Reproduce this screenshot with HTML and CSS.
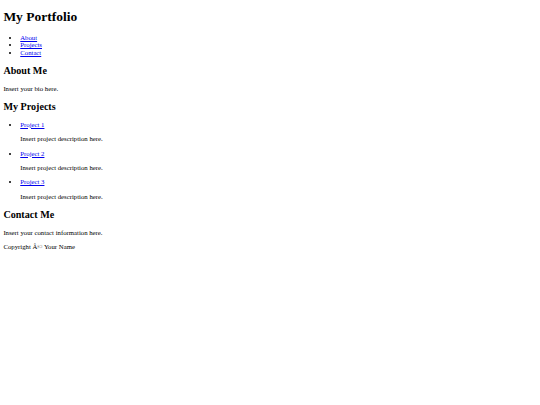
FILE: index.html
```html
<!DOCTYPE html>
<html>
<head>
<meta charset="utf-8">
<title>My Portfolio</title>
<link rel="stylesheet" href="styles.css">
</head>
<body>
<header>
<h1>My Portfolio</h1>
<nav>
<ul>
<li><a href="#about">About</a></li>
<li><a href="#projects">Projects</a></li>
<li><a href="#contact">Contact</a></li>
</ul>
</nav>
</header>
<section id="about">
<h2>About Me</h2>
<p>Insert your bio here.</p>
</section>
<section id="projects">
<h2>My Projects</h2>
<ul>
<li><a href="#">Project 1</a><p>Insert project description here.</p></li>
<li><a href="#">Project 2</a><p>Insert project description here.</p></li>
<li><a href="#">Project 3</a><p>Insert project description here.</p></li>
</ul>
</section>
<section id="contact">
<h2>Contact Me</h2>
<p>Insert your contact information here.</p>
</section>
<footer>
<p>Copyright Â© Your Name</p>
</footer>
</body>
</html>
```
FILE: styles.css
```css
body {
  margin: 3.375px;
  font-family: "Liberation Serif", "Times New Roman", serif;
  font-size: 6.75px;
  line-height: 7.594px;
  color: #000;
  background: #fff;
}
h1 {
  font-size: 13.5px;
  line-height: 15.61px;
  margin: 5.6px 0 9.045px;
}
h2 {
  font-size: 10.125px;
  line-height: 11.64px;
  margin: 8.404px 0;
}
p {
  margin: 6.75px 0;
}
ul {
  margin: 6.75px 0;
  padding-left: 16.875px;
}
a {
  color: #0000ee;
}
```
